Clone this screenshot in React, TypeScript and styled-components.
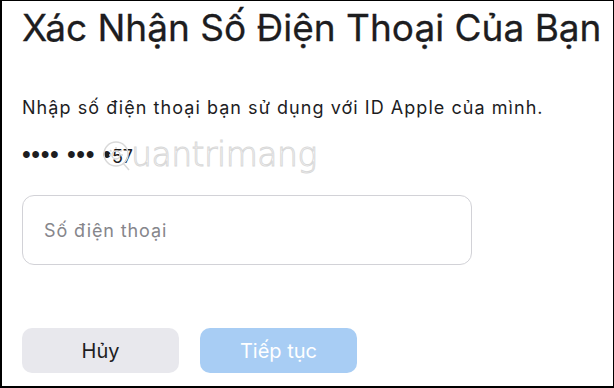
import styled, { createGlobalStyle } from 'styled-components';

const GlobalStyle = createGlobalStyle`
  html, body {
    margin: 0;
    padding: 0;
    background: #fff;
  }
  body {
    font-family: Inter, "Noto Sans", "Liberation Sans", sans-serif;
    color: #1d1d1f;
  }
`;

const Frame = styled.div`
  position: relative;
  box-sizing: border-box;
  width: 614px;
  height: 388px;
  border: 1px solid #000;
  border-left-width: 2px;
  border-bottom-width: 2px;
  padding: 0 0 0 20px;
  display: flex;
  flex-direction: column;
  overflow: hidden;
`;

const Title = styled.h1`
  margin: 5px 0 0;
  font-size: 37px;
  line-height: 44px;
  font-weight: 400;
  color: #1d1d1f;
  white-space: nowrap;
  -webkit-text-stroke: 0.3px #1d1d1f;
`;

const Subtitle = styled.p`
  margin: 46px 0 0;
  font-size: 18px;
  line-height: 24px;
  font-weight: 400;
  letter-spacing: 1.05px;
  color: #1d1d1f;
`;

const Masked = styled.div`
  margin-top: 25px;
  height: 24px;
  font-size: 18px;
  line-height: 24px;
  color: #1d1d1f;
  white-space: pre;
`;

const Dots = styled.span`
  font-family: "Liberation Sans", Arial, sans-serif;
  font-size: 25px;
  line-height: 0;
  letter-spacing: 0.6px;
`;

const Field = styled.div`
  box-sizing: border-box;
  margin-top: 26px;
  width: 450px;
  height: 70px;
  border: 1px solid #d2d2d7;
  border-radius: 12px;
  display: flex;
  align-items: center;
  padding: 0 19px;
`;

const Input = styled.input`
  border: none;
  outline: none;
  width: 100%;
  font-family: inherit;
  font-size: 18px;
  letter-spacing: 0.9px;
  color: #1d1d1f;
  background: transparent;
  &::placeholder {
    color: #86868b;
  }
`;

const Actions = styled.div`
  margin-top: 63px;
  display: flex;
  gap: 21px;
`;

const Button = styled.button<{ $primary?: boolean }>`
  width: 157px;
  height: 45px;
  border: none;
  border-radius: 10px;
  font-family: inherit;
  font-size: 20px;
  font-weight: 400;
  background: ${p => (p.$primary ? '#a8cdf4' : '#e8e8ed')};
  color: ${p => (p.$primary ? '#fff' : '#1d1d1f')};
`;

const Watermark = styled.div`
  position: absolute;
  left: 99px;
  top: 134px;
  display: flex;
  align-items: center;
  pointer-events: none;
`;

const WatermarkText = styled.span`
  font-family: "DejaVu Sans", sans-serif;
  font-size: 33px;
  line-height: 40px;
  font-weight: 300;
  color: transparent;
  -webkit-text-stroke: 1px #d9d9d9;
  letter-spacing: -0.5px;
`;

export default function App() {
  return (
    <>
      <GlobalStyle />
      <Frame>
        <Title>Xác Nhận Số Điện Thoại Của Bạn</Title>
        <Subtitle>Nhập số điện thoại bạn sử dụng với ID Apple của mình.</Subtitle>
        <Masked>
          <Dots>•••• ••• •</Dots>57
        </Masked>
        <Field>
          <Input placeholder="Số điện thoại" />
        </Field>
        <Actions>
          <Button>Hủy</Button>
          <Button $primary>Tiếp tục</Button>
        </Actions>
        <Watermark>
          <svg width="30" height="34" viewBox="0 0 30 34" fill="none" stroke="#d9d9d9" strokeWidth="1.5">
            <circle cx="15" cy="16" r="12" />
            <path d="M22 25 L28 32" />
            <circle cx="15" cy="17" r="4" />
            <path d="M15 9 V11 M9 12 L10.5 13.5 M21 12 L19.5 13.5 M8 17 H10 M20 17 H22" />
          </svg>
          <WatermarkText>uantrimang</WatermarkText>
        </Watermark>
      </Frame>
    </>
  );
}
